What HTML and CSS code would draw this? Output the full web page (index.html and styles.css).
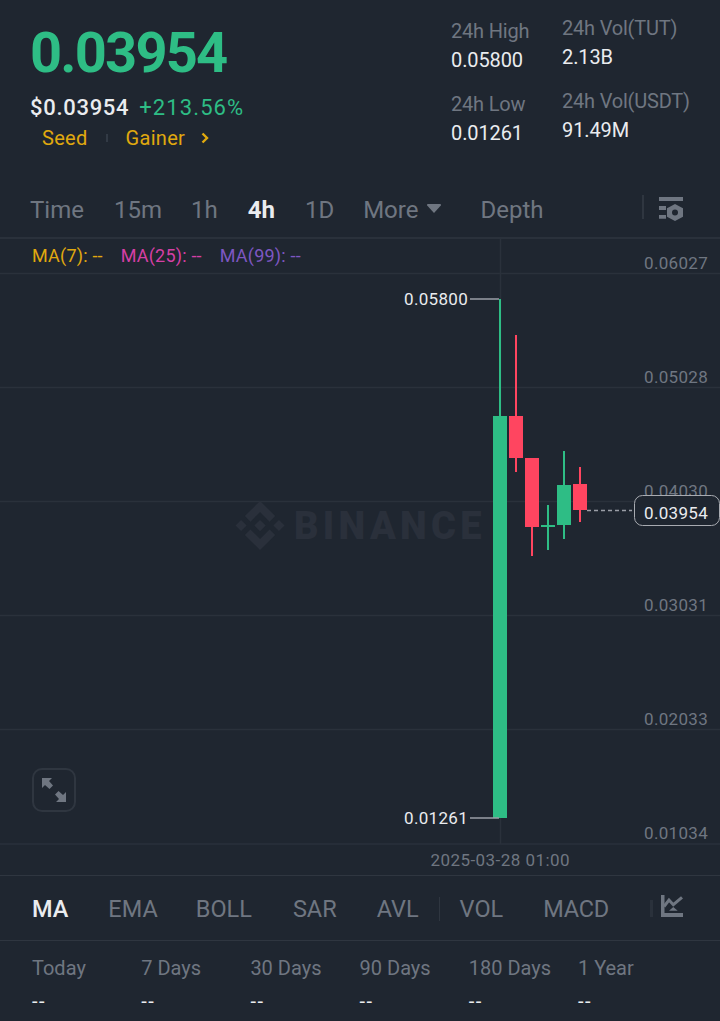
FILE: index.html
```html
<!DOCTYPE html>
<html lang="en">
<head>
<meta charset="utf-8">
<title>TUT/USDT</title>
<link rel="stylesheet" href="styles.css">
</head>
<body>
<div class="page">
  <header class="header">
    <div class="quote">
      <div class="price">0.03954</div>
      <div class="quote-line"><span class="fiat">$0.03954</span><span class="change">+213.56%</span></div>
      <div class="tags">
        <span>Seed</span><i class="tag-sep"></i><span>Gainer</span>
        <svg class="chev" width="8" height="12" viewBox="0 0 8 12"><path d="M1.5 1.5 6 6l-4.500 4.500" fill="none" stroke="currentColor" stroke-width="2.400"/></svg>
      </div>
    </div>
    <div class="stats stats-a">
      <div class="stat"><div class="stat-label">24h High</div><div class="stat-value">0.05800</div></div>
      <div class="stat"><div class="stat-label">24h Low</div><div class="stat-value">0.01261</div></div>
    </div>
    <div class="stats stats-b">
      <div class="stat"><div class="stat-label">24h Vol(TUT)</div><div class="stat-value">2.13B</div></div>
      <div class="stat"><div class="stat-label">24h Vol(USDT)</div><div class="stat-value">91.49M</div></div>
    </div>
  </header>

  <nav class="tabs">
    <span class="t-time">Time</span><span class="t-15">15m</span><span class="t-1h">1h</span><span class="t-4h active">4h</span><span class="t-1d">1D</span>
    <span class="t-more">More<svg class="caret" width="14" height="9" viewBox="0 0 14 9"><path d="M1 0h12a1 1 0 0 1 .8 1.500L7 9 .2 1.500A1 1 0 0 1 1 0Z" fill="currentColor"/></svg></span>
    <span class="t-depth">Depth</span>
    <i class="tabs-sep"></i>
    <svg class="tabs-icon" width="24" height="24" viewBox="0 0 24 24"><path fill="#6f7681" d="M0 0h24v4H0zM0 9h7v4H0zM0 18h7v3.700H0z"/><path fill="#6f7681" fill-rule="evenodd" d="M16 7l8 4.250v8.500L16 24l-8-4.250v-8.500zM19 15.500a3 3 0 1 1-6 0 3 3 0 1 1 6 0z"/></svg>
  </nav>

  <section class="chart">
    <div class="ma-row"><span class="ma7">MA(7): --</span><span class="ma25">MA(25): --</span><span class="ma99">MA(99): --</span></div>
    <svg class="chart-svg" width="720" height="606" viewBox="0 239 720 606">
      <g class="grid">
        <path d="M0 273.500h720M0 387.500h720M0 501.500h720M0 615.500h720M0 729.500h720M0 844h720"/>
        <path d="M500.500 239v605"/>
      </g>
      <g class="wm">
        <path transform="translate(235.200 500.700) scale(.394)" d="M38.730 53.200 63 28.900l24.300 24.300 14.100-14.100L63 .8 24.600 39.100zM.8 63l14.100-14.100L29 63 14.900 77.100zM38.700 72.800 63 97.100l24.300-24.300 14.100 14.100L63 125.200 24.600 86.900zM97 63l14.100-14.100L125.200 63l-14.100 14.100zM77.300 63 63 48.700 48.700 63 63 77.300z"/>
        <text class="wm-text" x="294" y="539">BINANCE</text>
      </g>
      <g class="axis">
        <text x="708" y="269">0.06027</text>
        <text x="708" y="383">0.05028</text>
        <text x="708" y="497">0.04030</text>
        <text x="708" y="611">0.03031</text>
        <text x="708" y="725">0.02033</text>
        <text x="708" y="839">0.01034</text>
      </g>
      <g class="up">
        <rect x="499" y="299" width="2" height="117"/><rect x="493" y="416" width="14" height="402"/>
        <rect x="547" y="505" width="2" height="45"/><rect x="541" y="525" width="14" height="2"/>
        <rect x="563" y="451" width="2" height="88"/><rect x="557" y="485" width="14" height="40"/>
      </g>
      <g class="down">
        <rect x="515" y="335" width="2" height="137"/><rect x="509" y="416" width="14" height="42"/>
        <rect x="531" y="458" width="2" height="98"/><rect x="525" y="458" width="14" height="69"/>
        <rect x="579" y="467" width="2" height="55"/><rect x="573" y="484" width="14" height="26"/>
      </g>
      <path class="leader" d="M470 299h29M470 818h29"/>
      <text class="extreme" x="468" y="305">0.05800</text>
      <text class="extreme" x="468" y="824">0.01261</text>
      <path class="dash" d="M587 510.500h45"/>
      <rect class="last-box" x="634.500" y="495.500" width="85" height="30" rx="8"/>
      <text class="last-text" x="708" y="518.500">0.03954</text>
    </svg>
    <button class="expand" type="button" aria-label="Expand">
      <svg width="26" height="26" viewBox="0 0 26 26"><path fill="#6f7681" d="M1 1h10L8 4l4 4.500L8.500 12 4 8l-3 3zM25 25H15l3-3-4-4.500 3.500-3.500L22 18l3-3z"/></svg>
    </button>
  </section>

  <div class="timebar">2025-03-28 01:00</div>

  <nav class="indicators">
    <span class="i-ma active">MA</span><span class="i-ema">EMA</span><span class="i-boll">BOLL</span><span class="i-sar">SAR</span><span class="i-avl">AVL</span>
    <i class="ind-sep"></i>
    <span class="i-vol">VOL</span><span class="i-macd">MACD</span><i class="ind-fade"></i>
    <svg class="ind-icon" width="22" height="22" viewBox="0 0 22 22"><path fill="#6f7681" d="M0 0h3.500v18H22v4H0z"/><path fill="none" stroke="#6f7681" stroke-width="3" d="M3 11.500l5-6.500 4.300 4.700L21 2.300"/><path fill="#6f7681" d="M12.300 12l4.400 3.700H8z"/></svg>
  </nav>

  <section class="periods">
    <div class="period"><div class="period-label">Today</div><div class="period-value">--</div></div>
    <div class="period"><div class="period-label">7 Days</div><div class="period-value">--</div></div>
    <div class="period"><div class="period-label">30 Days</div><div class="period-value">--</div></div>
    <div class="period"><div class="period-label">90 Days</div><div class="period-value">--</div></div>
    <div class="period"><div class="period-label">180 Days</div><div class="period-value">--</div></div>
    <div class="period"><div class="period-label">1 Year</div><div class="period-value">--</div></div>
  </section>
</div>
</body>
</html>
```
FILE: styles.css
```css
* { box-sizing: border-box; }
html, body { margin: 0; padding: 0; }
body { background: #1f2630; color: #eaecef; font-family: Roboto, "Noto Sans", sans-serif; }
.page { width: 720px; height: 1021px; overflow: hidden; display: flex; flex-direction: column; }

.header { height: 181px; position: relative; display: flex; flex: none; }
.quote { width: 451px; padding: 20px 0 0 30px; }
.price { font-size: 56px; line-height: 66px; font-weight: 700; color: #2ebd85; letter-spacing: -1.800px; }
.quote-line { display: flex; align-items: center; gap: 10px; height: 26px; margin-top: 8px; font-size: 22px; }
.fiat { font-weight: 500; color: #eaecef; letter-spacing: .7px; }
.change { color: #2ebd85; letter-spacing: 1.100px; }
.tags { display: flex; align-items: center; height: 24px; margin: 6px 0 0 12px; font-size: 20px; color: #e0a90e; letter-spacing: .3px; }
.tag-sep { width: 2px; height: 8px; margin: 0 18px; background: #323a45; }
.chev { margin-left: 16px; }

.stats { display: flex; flex-direction: column; gap: 17px; }
.stats-a { width: 111px; padding-top: 18px; }
.stats-b { padding-top: 15px; }
.stat-label { font-size: 20px; line-height: 26px; color: #6f7681; letter-spacing: -.2px; }
.stat-value { font-size: 20px; line-height: 28px; color: #eaecef; margin-top: 2px; letter-spacing: -.1px; }

.tabs { height: 58px; flex: none; display: flex; align-items: center; font-size: 24px; color: #6f7681; padding: 2px 0 0 30px; border-bottom: 2px solid #2a313b; }
.tabs .active { color: #eaecef; font-weight: 700; }
.t-15 { margin-left: 30px; }
.t-1h { margin-left: 29px; }
.t-4h { margin-left: 30px; }
.t-1d { margin-left: 30px; }
.t-more { margin-left: 29px; display: flex; align-items: center; }
.caret { margin: 0 0 3px 9px; }
.t-depth { margin-left: 39px; }
.tabs-sep { width: 2px; height: 24px; margin: -6px 0 0 99px; background: #2f3640; }
.tabs-icon { margin: -2px 0 0 15px; }

.chart { position: relative; height: 606px; flex: none; }
.chart-svg { display: block; }
.ma-row { position: absolute; left: 32px; top: 4px; display: flex; gap: 18px; font-size: 18px; line-height: 26px; letter-spacing: .2px; }
.ma7 { color: #e0a90e; }
.ma25 { color: #d63fa5; }
.ma99 { color: #7e57c2; }

.grid path { stroke: #2a313b; stroke-width: 1.500; fill: none; }
.wm path { fill: #2a303b; }
.wm-text { font-family: Roboto, sans-serif; font-weight: 900; font-size: 38px; letter-spacing: 4.300px; fill: #2a303b; }
.axis text { font-size: 17px; fill: #6f7681; text-anchor: end; letter-spacing: .3px; }
.up rect { fill: #2ebd85; }
.down rect { fill: #ff4560; }
.leader { stroke: #9a9ea6; stroke-width: 1.500; fill: none; }
.extreme { font-size: 17px; fill: #eaecef; text-anchor: end; letter-spacing: .3px; }
.dash { stroke: #9a9ea6; stroke-width: 1.500; stroke-dasharray: 4 3; fill: none; }
.last-box { fill: #1f2630; stroke: #a8abb1; stroke-width: 1; }
.last-text { font-size: 17px; fill: #eaecef; text-anchor: end; letter-spacing: .3px; }

.expand { position: absolute; left: 32px; top: 529px; width: 44px; height: 44px; padding: 0; background: transparent; border: 2px solid #2f3640; border-radius: 10px; display: flex; align-items: center; justify-content: center; }

.timebar { height: 30px; flex: none; font-size: 17px; line-height: 30px; color: #6f7681; text-align: right; padding-right: 150px; letter-spacing: .45px; }

.indicators { height: 66px; flex: none; display: flex; align-items: center; font-size: 23.500px; color: #6f7681; padding: 1px 0 0 32px; border-top: 1px solid #2f3640; border-bottom: 1px solid #2f3640; }
.indicators .active { color: #eaecef; font-weight: 500; }
.i-ema { margin-left: 40px; }
.i-boll { margin-left: 38px; }
.i-sar { margin-left: 41px; }
.i-avl { margin-left: 40px; }
.ind-sep { width: 1px; height: 24px; margin-left: 20px; background: #2f3640; }
.i-vol { margin-left: 20px; }
.i-macd { margin-left: 40px; letter-spacing: -.2px; }
.ind-fade { width: 3px; height: 17px; margin-left: 41px; background: #2a313b; }
.ind-icon { margin: -5px 0 0 8px; }

.periods { display: grid; grid-template-columns: repeat(6, 109.200px); padding: 14px 0 0 32px; }
.period-label { font-size: 20px; line-height: 26px; color: #6f7681; }
.period-value { font-size: 20px; line-height: 26px; margin-top: 7px; color: #eaecef; letter-spacing: 1.500px; }
```
